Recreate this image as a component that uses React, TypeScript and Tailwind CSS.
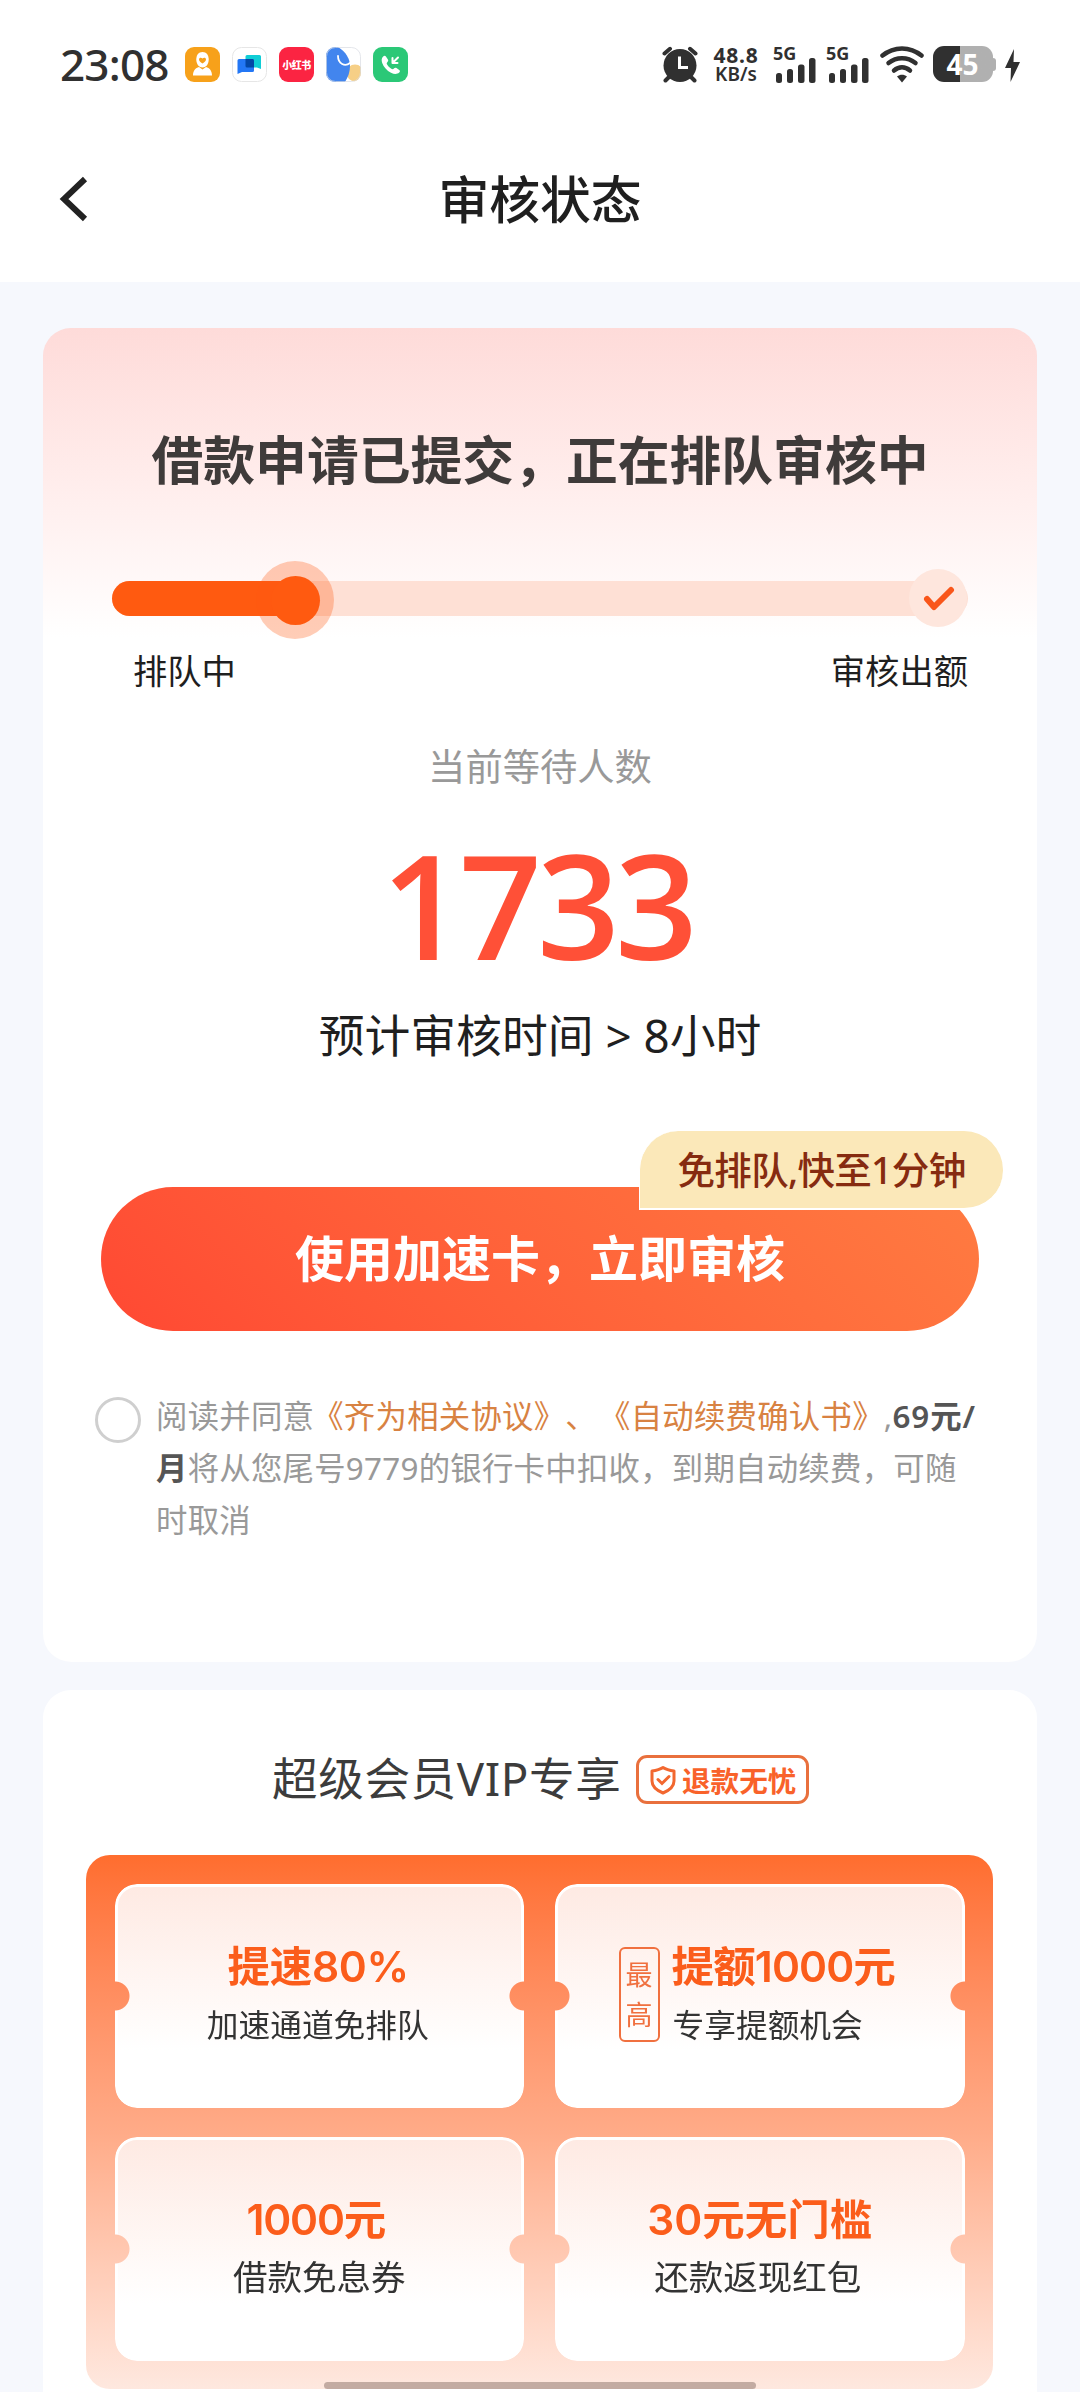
import React from 'react';

function StatusApps() {
  return (
    <div className="ml-[17px] flex gap-[12px]">
      <svg className="h-[35px] w-[35px]" viewBox="0 0 35 35">
        <rect width="35" height="35" rx="9" fill="#f7a11a" />
        <path d="M17.5 5c4 0 6.200 3 6.200 7.500 0 5-3 8-6.200 8s-6.200-3-6.200-8C11.300 8 13.500 5 17.500 5Z" fill="#fff" />
        <path d="M17.500 16.500c-2.200-1.300-3.500-2.600-3.500-4.200 0-1.800 2.300-2.200 3.500-.7 1.200-1.500 3.500-1.100 3.500.7 0 1.600-1.300 2.900-3.500 4.200Z" fill="#f7a11a" />
        <path d="M8 28.500c0-5 2.500-7.500 6-8.500l3.500 2.500 3.500-2.500c3.500 1 6 3.500 6 8.500Z" fill="#fff" />
      </svg>
      <svg className="h-[35px] w-[35px]" viewBox="0 0 35 35">
        <rect x=".5" y=".5" width="34" height="34" rx="9" fill="#fff" stroke="#e6e6e6" />
        <path d="M15 8h12.500a1.500 1.500 0 0 1 1.500 1.500V22l-4-1.500H15a1.500 1.500 0 0 1-1.500-1.500V9.500A1.500 1.500 0 0 1 15 8Z" fill="#10cdd6" />
        <path d="M7 12h13.500a1.500 1.500 0 0 1 1.500 1.500v10a1.500 1.500 0 0 1-1.500 1.500H10l-4.500 2V13.500A1.500 1.500 0 0 1 7 12Z" fill="#2377f5" />
        <path d="M13.500 12h7a1.500 1.500 0 0 1 1.500 1.500v7h-7a1.500 1.500 0 0 1-1.500-1.500Z" fill="#0347a6" />
      </svg>
      <div className="flex h-[35px] w-[35px] items-center justify-center rounded-[9px] bg-[#fb2442] text-[10px] leading-none font-black tracking-[-0.5px] whitespace-nowrap text-white">小红书</div>
      <svg className="h-[35px] w-[35px]" viewBox="0 0 35 35">
        <defs>
          <clipPath id="app-clip"><rect width="35" height="35" rx="9" /></clipPath>
        </defs>
        <g clipPath="url(#app-clip)">
          <rect width="35" height="35" fill="#fff" />
          <circle cx="29" cy="26" r="8.500" fill="#f6cf86" />
          <path d="M0 0h12c8 5 12 12 12 19 0 6-2 11-5 16H0Z" fill="#4285ee" />
          <path d="M12 9c0 8 7 11 12 7" fill="none" stroke="#fff" strokeWidth="1.800" strokeLinecap="round" />
        </g>
        <rect x=".5" y=".5" width="34" height="34" rx="9" fill="none" stroke="#d8dce2" strokeOpacity=".7" />
      </svg>
      <svg className="h-[35px] w-[35px]" viewBox="0 0 35 35">
        <rect width="35" height="35" rx="9" fill="#2bc877" />
        <path d="M10.200 9.500c1-1 2-1 2.700 0l2 3c.6.900.3 1.700-.4 2.400-1 .9-1 1.600-.2 2.900 1 1.700 2.300 2.900 4 3.900 1.200.7 1.900.6 2.800-.4.700-.7 1.500-.9 2.400-.3l2.700 2c1 .8.900 1.700 0 2.600-2.200 2-5 1.800-8.200.2-4.200-2.200-7.300-5.700-8.800-9.800-.9-2.700-.7-4.900 1-6.500Z" fill="#fff" />
        <path d="M25 10.500l-5 5M19.500 11v5h5" stroke="#fff" strokeWidth="2" fill="none" strokeLinecap="round" strokeLinejoin="round" />
      </svg>
    </div>
  );
}

function Signal() {
  return (
    <div className="flex w-[42px] flex-col">
      <span className="-mt-[1px] -ml-[1px] h-[12px] text-[18px] leading-[17px] font-bold">5G</span>
      <svg className="ml-[2px] h-[26px] w-[40px]" viewBox="0 0 40 26">
        <rect x="0" y="16" width="6" height="10" rx="2.500" fill="#303030" />
        <rect x="11" y="12" width="6" height="14" rx="2.500" fill="#303030" />
        <rect x="22" y="7.500" width="6.500" height="18.500" rx="2.500" fill="#303030" />
        <rect x="33" y="1" width="6.500" height="25" rx="2.500" fill="#303030" />
      </svg>
    </div>
  );
}

function StatusBar() {
  return (
    <div className="flex h-[129px] items-center pl-[60px] text-[#303030]">
      <span className="-mt-[2px] w-[108px] text-[44px] leading-[36px] font-medium tracking-[-0.8px] whitespace-nowrap">23:08</span>
      <StatusApps />
      <div className="ml-[253px] flex h-[37px] items-start">
        <svg className="h-[37px] w-[38px]" viewBox="0 0 38 37">
          <circle cx="19" cy="19.500" r="16.500" fill="#303030" />
          <path d="M3.500 7.500l5.500-4.700M34.500 7.500l-5.500-4.700" stroke="#303030" strokeWidth="4" strokeLinecap="round" />
          <path d="M8 31l-3.500 3.500M30 31l3.500 3.500" stroke="#303030" strokeWidth="4" strokeLinecap="round" />
          <path d="M18.500 10.500v11H27" stroke="#fff" strokeWidth="3" fill="none" />
        </svg>
        <div className="-mt-[1px] ml-[11px] flex w-[52px] flex-col items-center font-bold">
          <span className="h-[19px] text-[21px] leading-[20px] tracking-[0.8px]">48.8</span>
          <span className="h-[20px] text-[19px] leading-[20px] font-semibold">KB/s</span>
        </div>
        <div className="ml-[12px]"><Signal /></div>
        <div className="ml-[11px]"><Signal /></div>
        <svg className="ml-[11px] h-[37px] w-[44px]" viewBox="0 0 44 37">
          <g fill="none" stroke="#303030" strokeWidth="4.500" strokeLinecap="round">
            <path d="M2.500 9.500C14 0 30 0 41.500 9.500" />
            <path d="M8.500 17c8-6.500 19-6.500 27 0" />
            <path d="M14 24.500c5-4.200 11-4.200 16 0" />
          </g>
          <path d="M22 36.500l-5-6c3-2.300 7-2.300 10 0Z" fill="#303030" />
        </svg>
        <div className="ml-[9px] flex items-center">
          <div className="flex h-[36px] w-[60px] items-center justify-center rounded-[11px] bg-linear-to-r from-[#303030] from-45% to-[#b0b0b0] to-45% text-[28px] leading-none font-bold text-white"><span className="-mt-[1px] -ml-[1px]">45</span></div>
          <div className="h-[13px] w-[3px] rounded-r-[3px] bg-[#b0b0b0]" />
        </div>
        <svg className="mt-[3px] ml-[9px] h-[33px] w-[15px]" viewBox="0 0 15 33">
          <path d="M9 0L0 19h6L5.500 33 15 13H8.500Z" fill="#303030" />
        </svg>
      </div>
    </div>
  );
}

function Header() {
  return (
    <header className="h-[282px] bg-white">
      <StatusBar />
      <div className="relative flex h-[142px] items-center justify-center">
        <svg className="absolute top-[47px] left-[59px] h-[46px] w-[30px]" viewBox="0 0 30 46">
          <path d="M26 3L5 23l21 20" fill="none" stroke="#222" strokeWidth="6" />
        </svg>
        <h1 className="text-[50.800px] leading-[60px] font-medium text-[#1f1f1f]">审核状态</h1>
      </div>
    </header>
  );
}

function Progress() {
  return (
    <div className="relative mx-[69px] mt-[71px] h-[78px]">
      <div className="absolute top-[20px] left-0 h-[35px] w-full rounded-full bg-[#fee0d5]" />
      <div className="absolute top-[20px] left-0 h-[35px] w-[190px] rounded-full bg-[#ff5a10]" />
      <div className="absolute top-0 left-[144px] flex h-[78px] w-[78px] items-center justify-center rounded-full bg-[#ff5a10]/30">
        <div className="h-[49px] w-[49px] rounded-full bg-[#ff5a10]" />
      </div>
      <div className="absolute top-[8px] right-[1px] flex h-[58px] w-[58px] items-center justify-center rounded-full bg-[#fee6dd]">
        <svg className="mt-[4px] ml-[2px] h-[28px] w-[34px]" viewBox="0 0 34 28">
          <path d="M5 13l7 8L29 4" fill="none" stroke="#f9561a" strokeWidth="6" strokeLinecap="round" strokeLinejoin="round" />
        </svg>
      </div>
    </div>
  );
}

function StatusCard() {
  return (
    <section className="mx-[43px] mt-[46px] h-[1334px] rounded-[28px] bg-white bg-linear-to-b from-[#fedbd9] to-white to-[310px] pt-[102px]">
      <h2 className="text-center text-[51.800px] leading-[60px] font-semibold whitespace-nowrap text-[#3f3b3a]">借款申请已提交，正在排队审核中</h2>
      <Progress />
      <div className="mt-[12px] mr-[69px] ml-[90px] flex justify-between text-[34.300px] leading-[40px] text-[#1f1f1f]">
        <span>排队中</span>
        <span>审核出额</span>
      </div>
      <p className="mt-[54px] text-center text-[37.300px] leading-[44px] text-[#999]">当前等待人数</p>
      <p className="mt-[45px] -ml-[6px] text-center font-['Open_Sans','Noto_Sans',sans-serif] text-[145px] leading-[140px] font-semibold tracking-[-5px] text-[#ff5037]">1733</p>
      <p className="mt-[31px] text-center text-[45.800px] leading-[60px] whitespace-nowrap text-[#1f1f1f]">预计审核时间 &gt; 8小时</p>
      <div className="relative mx-[58px] mt-[122px]">
        <button className="h-[144px] w-full rounded-full bg-linear-45 from-[#ff4833] to-[#ff7b41] pb-[3px] text-[49px] leading-[60px] font-semibold text-white">使用加速卡，立即审核</button>
        <div className="absolute -top-[56px] -right-[24px] h-[79px] w-[364px] rounded-[39px] rounded-bl-none border-b-2 border-l border-white bg-[#fbe8b9] text-center text-[37.500px] leading-[77px] font-medium tracking-[-0.700px] whitespace-nowrap text-[#862b10]">免排队,快至1分钟</div>
      </div>
      <div className="mt-[59px] ml-[52px] flex">
        <div className="mt-[7px] h-[46px] w-[46px] shrink-0 rounded-full border-3 border-[#cfcfcf]" />
        <p className="ml-[15px] text-[31.400px] leading-[52px] tracking-[0.250px] whitespace-nowrap text-[#999] [text-spacing-trim:space-all]">
          阅读并同意<span className="-ml-[2px] text-[#d88242]">《齐为相关协议》、<span className="ml-[2px]">《自动续费确认书》</span></span>,<b className="font-semibold tracking-[0.900px] text-[#555]">69元/</b>
          <br />
          <b className="font-semibold text-[#555]">月</b>将从您尾号9779的银行卡中扣收，到期自动续费，可随
          <br />
          时取消
        </p>
      </div>
    </section>
  );
}

function Tile({ children }: { children: React.ReactNode }) {
  return (
    <div className="flex h-[224px] justify-center rounded-[22px] border-3 border-white bg-linear-to-b from-[#feeae3] to-white to-75% [mask-composite:intersect] [mask-image:radial-gradient(circle_at_0_50%,transparent_14px,#000_15px),radial-gradient(circle_at_100%_50%,transparent_14px,#000_15px)] [mask-origin:border-box]">
      {children}
    </div>
  );
}

function VipCard() {
  return (
    <section className="mx-[43px] mt-[28px] h-[702px] rounded-t-[28px] bg-white pt-[58px]">
      <div className="flex h-[60px] items-center pl-[229px]">
        <h3 className="w-[364px] text-[45.600px] leading-[60px] tracking-[0.600px] whitespace-nowrap text-[#3c3c3c]">超级会员VIP专享</h3>
        <div className="mt-[3px] flex h-[49px] w-[173px] items-center rounded-[11px] border-3 border-[#e9703d] pl-[10px] text-[#f9622a]">
          <svg className="h-[30px] w-[28px]" viewBox="0 0 28 30">
            <path d="M14 2.500c3 2 7 3 11 3.500v10c0 6-5 9.500-11 12C8 25.500 3 22 3 16V6c4-.5 8-1.500 11-3.500Z" fill="none" stroke="#f2672f" strokeWidth="3" strokeLinejoin="round" />
            <path d="M9 14.500l4 4 7-7" fill="none" stroke="#f2672f" strokeWidth="3" strokeLinecap="round" />
          </svg>
          <span className="mt-[3px] ml-[5px] text-[28.600px] leading-[40px] font-semibold whitespace-nowrap">退款无忧</span>
        </div>
      </div>
      <div className="mt-[47px] mr-[44px] ml-[43px] grid h-[534px] grid-cols-2 content-start gap-x-[31px] gap-y-[29px] rounded-[24px] bg-linear-to-b from-[#ff6d2e] via-[#ffab88] via-52% to-[#fee8df] px-[28.500px] pt-[29px]">
        <Tile>
          <div className="flex flex-col items-center pt-[54px]">
            <b className="-ml-[2px] font-['Inter','Noto_Sans_CJK_SC',sans-serif] text-[42.500px] leading-[52px] font-semibold tracking-[-0.300px] text-[#fb5d1b]">提速80%</b>
            <span className="mt-[12px] -ml-[3px] text-[31.700px] leading-[40px] text-[#333]">加速通道免排队</span>
          </div>
        </Tile>
        <Tile>
          <div className="-ml-[6px] flex">
            <div className="mt-[60px] mr-[12px] flex h-[95px] w-[41px] flex-col items-center justify-center rounded-[6px] border-2 border-[#f0703f] text-[27px] leading-[40px] text-[#f0703f]">
              <span>最</span>
              <span>高</span>
            </div>
            <div className="flex flex-col pt-[54px]">
              <b className="font-['Inter','Noto_Sans_CJK_SC',sans-serif] text-[42.500px] leading-[52px] font-semibold tracking-[-0.900px] whitespace-nowrap text-[#fb5d1b]">提额1000元</b>
              <span className="mt-[12px] ml-[1px] text-[31.700px] leading-[40px] text-[#333]">专享提额机会</span>
            </div>
          </div>
        </Tile>
        <Tile>
          <div className="flex flex-col items-center pt-[54px]">
            <b className="-ml-[7px] font-['Inter','Noto_Sans_CJK_SC',sans-serif] text-[42.500px] leading-[52px] font-semibold tracking-[-1.200px] text-[#fb5d1b]">1000元</b>
            <span className="mt-[11px] text-[34.500px] leading-[40px] text-[#333]">借款免息券</span>
          </div>
        </Tile>
        <Tile>
          <div className="flex flex-col items-center pt-[54px]">
            <b className="font-['Inter','Noto_Sans_CJK_SC',sans-serif] text-[42.500px] leading-[52px] font-semibold text-[#fb5d1b]">30元无门槛</b>
            <span className="mt-[11px] -ml-[4px] text-[34.500px] leading-[40px] text-[#333]">还款返现红包</span>
          </div>
        </Tile>
      </div>
    </section>
  );
}

export default function App() {
  return (
    <div lang="zh-CN" className="relative h-[2392px] w-[1080px] overflow-hidden bg-[#f6f8fd] font-['Noto_Sans','Noto_Sans_CJK_SC',sans-serif]">
      <Header />
      <StatusCard />
      <VipCard />
      <div className="absolute bottom-[3px] left-[324px] h-[7px] w-[432px] rounded-full bg-[#c3aba2]" />
    </div>
  );
}
